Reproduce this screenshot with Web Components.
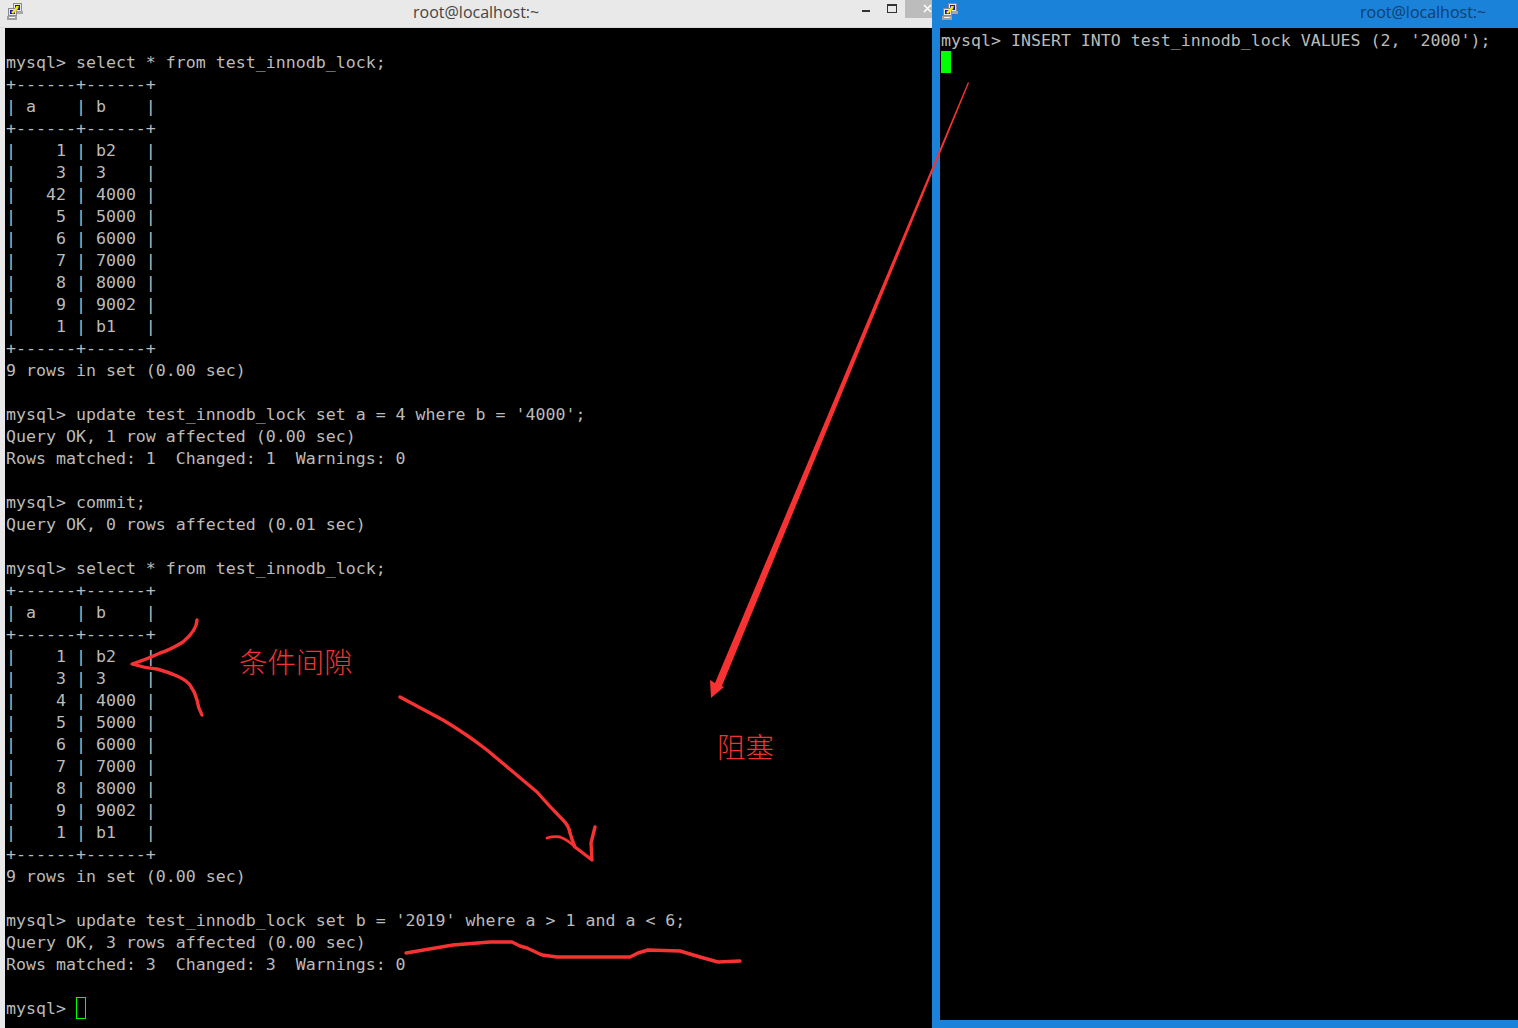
<!DOCTYPE html>
<html lang="en">
<head>
<meta charset="utf-8">
<title>root@localhost</title>
<style>
    html, body { margin: 0; padding: 0; background: #000; }
</style>
</head>
<body>
<term-desktop>
    <term-window slot="left" heading="root@localhost:~" controls style="--title-left: 390px; --icon-left: 7px; --frame: #e9e9e9; --title-color: #444; --side: 5px; --foot: 0px; --line: #dcdcdc; --width: 932px">
        <term-screen>
mysql&gt; select * from test_innodb_lock;
+------+------+
| a    | b    |
+------+------+
|    1 | b2   |
|    3 | 3    |
|   42 | 4000 |
|    5 | 5000 |
|    6 | 6000 |
|    7 | 7000 |
|    8 | 8000 |
|    9 | 9002 |
|    1 | b1   |
+------+------+
9 rows in set (0.00 sec)

mysql&gt; update test_innodb_lock set a = 4 where b = '4000';
Query OK, 1 row affected (0.00 sec)
Rows matched: 1  Changed: 1  Warnings: 0

mysql&gt; commit;
Query OK, 0 rows affected (0.01 sec)

mysql&gt; select * from test_innodb_lock;
+------+------+
| a    | b    |
+------+------+
|    1 | b2   |
|    3 | 3    |
|    4 | 4000 |
|    5 | 5000 |
|    6 | 6000 |
|    7 | 7000 |
|    8 | 8000 |
|    9 | 9002 |
|    1 | b1   |
+------+------+
9 rows in set (0.00 sec)

mysql&gt; update test_innodb_lock set b = '2019' where a &gt; 1 and a &lt; 6;
Query OK, 3 rows affected (0.00 sec)
Rows matched: 3  Changed: 3  Warnings: 0

mysql&gt; <term-cursor hollow></term-cursor></term-screen>
    </term-window>
    <term-window slot="right" heading="root@localhost:~" style="--title-left: 402px; --icon-left: 10px; --frame: #1a82d8; --title-color: #0e3f6e; --side: 8px; --foot: 8px; --line: #1a82d8; --width: 586px">
        <term-screen>mysql&gt; INSERT INTO test_innodb_lock VALUES (2, '2000');
<term-cursor></term-cursor></term-screen>
    </term-window>
    <ink-layer></ink-layer>
</term-desktop>

<script>
class TermDesktop extends HTMLElement {
    constructor() {
        super();
        this.attachShadow({mode: 'open'});
        this.shadowRoot.innerHTML = `
            <style>
                :host {
                    display: flex;
                    position: relative;
                    width: 1518px;
                    height: 1028px;
                    overflow: hidden;
                    background: #000;
                }
            </style>
            <slot name="left"></slot>
            <slot name="right"></slot>
            <slot></slot>
        `;
    }
}

class PuttyIcon extends HTMLElement {
    constructor() {
        super();
        this.attachShadow({mode: 'open'});
        this.shadowRoot.innerHTML = `
            <style>
                :host { display: block; width: 16px; height: 17px; }
                svg { display: block; }
            </style>
            <svg width="16" height="17" viewBox="0 0 16 17" shape-rendering="crispEdges">
                <rect x="6" y="0" width="9" height="9" fill="#8a8a8a"/>
                <rect x="7" y="1" width="7" height="7" fill="#e8e8e8"/>
                <rect x="8" y="2" width="5" height="5" fill="#1515b0"/>
                <rect x="9" y="8" width="7" height="3" fill="#a8a8a8"/>
                <rect x="1" y="5" width="9" height="8" fill="#8a8a8a"/>
                <rect x="2" y="6" width="7" height="6" fill="#e8e8e8"/>
                <rect x="3" y="7" width="5" height="4" fill="#1515b0"/>
                <rect x="0" y="13" width="10" height="4" fill="#a0a0a0"/>
                <rect x="2" y="14" width="6" height="1" fill="#f4f4f4"/>
                <path d="M4 9 L8 6 L9 3 L12 3 L11 6 L8 9 L6 11 Z" fill="#f6e500" shape-rendering="auto"/>
            </svg>
        `;
    }
}

class WindowControls extends HTMLElement {
    constructor() {
        super();
        this.attachShadow({mode: 'open'});
        this.shadowRoot.innerHTML = `
            <style>
                :host { display: flex; height: 18px; }
                .min, .max { width: 26px; display: flex; justify-content: center; }
                .min i { display: block; width: 8px; height: 2px; background: #333; margin-top: 10px; }
                .max i { display: block; width: 8px; height: 6px; border: 1px solid #333; border-top-width: 2px; margin-top: 4px; }
                .close { width: 27px; background: #bcbcbc; position: relative; }
                svg { position: absolute; left: 18px; top: 4px; }
            </style>
            <div class="min"><i></i></div>
            <div class="max"><i></i></div>
            <div class="close">
                <svg width="9" height="9" viewBox="0 0 9 9"><path d="M1 1 L8 8 M8 1 L1 8" stroke="#fff" stroke-width="1.6"/></svg>
            </div>
        `;
    }
}

class TermWindow extends HTMLElement {
    constructor() {
        super();
        this.attachShadow({mode: 'open'});
        this.shadowRoot.innerHTML = `
            <style>
                :host {
                    display: flex;
                    flex-flow: column;
                    box-sizing: border-box;
                    width: var(--width);
                    height: 1028px;
                    flex: none;
                    background: var(--frame);
                    padding: 0 0 var(--foot) var(--side);
                }
                header {
                    display: flex;
                    height: 27px;
                    flex: none;
                    margin-left: calc(-1 * var(--side));
                    border-bottom: 1px solid var(--line);
                    position: relative;
                }
                putty-icon { margin: 3px 0 0 var(--icon-left, 8px); flex: none; }
                h1 {
                    margin: 0 0 0 var(--title-left);
                    font: 400 16px/25px "Open Sans", "Noto Sans", sans-serif;
                    color: var(--title-color);
                    white-space: nowrap;
                }
                window-controls { position: absolute; right: 0; top: 0; }
                main { flex: 1; background: #000; overflow: hidden; min-height: 0; }
            </style>
            <header>
                <putty-icon></putty-icon>
                <h1></h1>
            </header>
            <main><slot></slot></main>
        `;
        this.shadowRoot.querySelector('h1').textContent = this.getAttribute('heading');
        if(this.hasAttribute('controls')) {
            this.shadowRoot.querySelector('header').appendChild(document.createElement('window-controls'));
        }
    }
}

class TermScreen extends HTMLElement {
    constructor() {
        super();
        this.attachShadow({mode: 'open'});
        this.shadowRoot.innerHTML = `
            <style>
                :host {
                    display: block;
                    padding: 2px 0 0 1px;
                    font: 400 16.6px/22px "DejaVu Sans Mono", "Liberation Mono", monospace;
                    color: #bbb;
                }
                slot { white-space: pre; }
            </style>
            <slot></slot>
        `;
    }
}

class TermCursor extends HTMLElement {
    constructor() {
        super();
        this.attachShadow({mode: 'open'});
        this.shadowRoot.innerHTML = `
            <style>
                :host {
                    display: inline-block;
                    box-sizing: border-box;
                    width: 10px;
                    height: 22px;
                    margin-top: -1px;
                    vertical-align: top;
                    background: #00ff00;
                }
                :host([hollow]) {
                    background: none;
                    border: 1px solid #00ff00;
                }
            </style>
        `;
    }
}

class InkLayer extends HTMLElement {
    constructor() {
        super();
        this.attachShadow({mode: 'open'});
        this.shadowRoot.innerHTML = `
            <style>
                :host { position: absolute; inset: 0; pointer-events: none; }
                svg { position: absolute; left: 0; top: 0; }
                span {
                    position: absolute;
                    font: 300 28.4px/32px "Noto Sans CJK SC", sans-serif;
                    color: #ee3430;
                    white-space: nowrap;
                }
                .gap { left: 239px; top: 645px; }
                .block { left: 717px; top: 730px; }
                .pen { fill: none; stroke: #f73232; stroke-linecap: round; stroke-linejoin: round; }
            </style>
            <svg width="1518" height="1028" viewBox="0 0 1518 1028">
                <path class="pen" stroke-width="3.4" d="M197 620 Q197 630 183 642 Q170 650 160 653 Q145 660 132 664 Q145 668 157 669 Q168 672 177 676 Q186 680 190 685 Q195 692 197 700 Q198 708 202 715"/>
                <path class="pen" stroke-width="3.4" d="M400 697 L443 720 Q465 733 487 750 L537 792 Q550 807 563 820 Q569 826 570 833 Q572 840 575 847 L592 860 L591 843 L595 827"/>
                <path class="pen" stroke-width="2.8" d="M547 838 Q554 836 560 837 Q568 840 575 847"/>
                <path class="pen" stroke-width="3.4" d="M406 953 L453 945 L490 942 L512 942 L520 946 L527 948 L542 955 L557 957 L630 957 L638 953 L648 950 L680 951 L700 957 L718 962 L740 961"/>
                <polygon fill="#f73232" points="968,82 969,83 722,686 724,687 711,698 710,680 715,683"/>
            </svg>
            <span class="gap">条件间隙</span>
            <span class="block">阻塞</span>
        `;
    }
}

customElements.define('putty-icon', PuttyIcon);
customElements.define('window-controls', WindowControls);
customElements.define('term-cursor', TermCursor);
customElements.define('term-screen', TermScreen);
customElements.define('term-window', TermWindow);
customElements.define('ink-layer', InkLayer);
customElements.define('term-desktop', TermDesktop);
</script>
</body>
</html>
